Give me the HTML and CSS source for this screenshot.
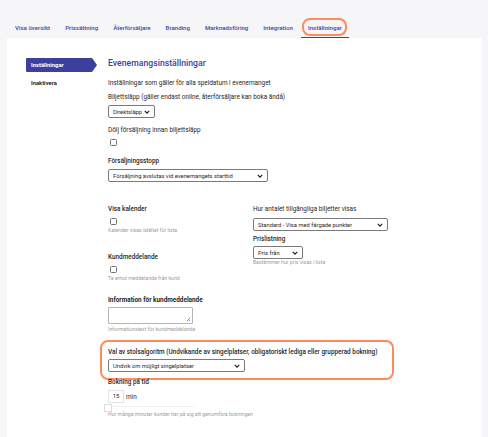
FILE: index.html
```html
<!DOCTYPE html>
<html lang="sv">
  <head>
    <meta charset="UTF-8" />
    <meta name="viewport" content="width=device-width, initial-scale=1.0" />
    <title>Evenemangsinställningar</title>
    <link rel="stylesheet" href="styles.css">
  </head>
  <body>
    <nav class="tabs">
      <a class="tab">Visa översikt</a>
      <a class="tab">Prissättning</a>
      <a class="tab">Återförsäljare</a>
      <a class="tab">Branding</a>
      <a class="tab">Marknadsföring</a>
      <a class="tab">Integration</a>
      <a class="tab active marked">Inställningar</a>
    </nav>

    <div class="panel">
      <aside class="side">
        <a class="side-item active">Inställningar</a>
        <a class="side-item">Inaktivera</a>
      </aside>

      <main class="content">
        <h2>Evenemangsinställningar</h2>
        <p class="intro">Inställningar som gäller för alla speldatum i evenemanget</p>

        <div class="field">
          <div class="label">Biljettsläpp (gäller endast online, återförsäljare kan boka ändå)</div>
          <div class="select w-47"><span>Direktsläpp</span><svg viewBox="0 0 8 5"><path d="M1 1l3 3 3-3"/></svg></div>
        </div>

        <div class="field after-check">
          <div class="label">Dölj försäljning innan biljettsläpp</div>
          <div class="checkbox"></div>
        </div>

        <div class="field">
          <div class="label strong">Försäljningsstopp</div>
          <div class="select w-160"><span>Försäljning avslutas vid evenemangets starttid</span><svg viewBox="0 0 8 5"><path d="M1 1l3 3 3-3"/></svg></div>
        </div>

        <div class="cols">
          <div class="col">
            <div class="field calendar">
              <div class="label strong">Visa kalender</div>
              <div class="checkbox"></div>
              <div class="help">Kalender visas istället för lista</div>
            </div>
            <div class="field message">
              <div class="label strong">Kundmeddelande</div>
              <div class="checkbox"></div>
              <div class="help">Ta emot meddelande från kund</div>
            </div>
            <div class="field info">
              <div class="label bold">Information för kundmeddelande</div>
              <div class="textarea"><svg viewBox="0 0 6 6"><path d="M5 1L1 5M5 3.5L3.5 5"/></svg></div>
              <div class="help">Informationstext för kundmeddelande</div>
            </div>
          </div>

          <div class="col">
            <div class="field availability">
              <div class="label">Hur antalet tillgängliga biljetter visas</div>
              <div class="select w-135"><span>Standard - Visa med färgade punkter</span><svg viewBox="0 0 8 5"><path d="M1 1l3 3 3-3"/></svg></div>
            </div>
            <div class="field pricing">
              <div class="label strong">Prislistning</div>
              <div class="select w-50"><span>Pris från</span><svg viewBox="0 0 8 5"><path d="M1 1l3 3 3-3"/></svg></div>
              <div class="help">Bestämmer hur pris visas i lista</div>
            </div>
          </div>
        </div>

        <div class="field marked-box">
          <div class="label strong">Val av stolsalgoritm (Undvikande av singelplatser, obligatoriskt lediga eller grupperad bokning)</div>
          <div class="select w-137"><span>Undvik om möjligt singelplatser</span><svg viewBox="0 0 8 5"><path d="M1 1l3 3 3-3"/></svg></div>
        </div>

        <div class="field timer">
          <div class="label strong">Bokning på tid</div>
          <div class="number-row">
            <div class="number">15</div>
            <span>min</span>
          </div>
          <div class="ghost"></div>
          <div class="help">Hur många minuter kunder har på sig att genomföra bokningen</div>
        </div>
      </main>
    </div>
  </body>
</html>
```

FILE: styles.css
```css
* {
  box-sizing: border-box;
}

body {
  margin: 0;
  background: #f6f5f7;
  font-family: Roboto, "Liberation Sans", sans-serif;
  color: #1f1f1f;
  font-size: 6.4px;
  min-height: 437px;
}

.tabs {
  display: flex;
  align-items: flex-end;
  height: 38px;
  padding-left: 8px;
}

.tab {
  position: relative;
  padding: 0 7px;
  margin-right: 1px;
  line-height: 19px;
  border-bottom: 1px solid transparent;
  color: #4146a8;
  font-weight: 500;
  font-size: 6.1px;
}

.tab.active {
  border-bottom-color: #3c3f9e;
}

/* orange annotation round the chosen tab */
.tab.marked::after {
  content: "";
  position: absolute;
  left: 1px;
  right: 2px;
  top: 0;
  bottom: 1px;
  border: 2px solid #ff8a5b;
  border-radius: 8px;
}

.panel {
  display: flex;
  margin-left: 7px;
  width: 475px;
  min-height: 399px;
  background: white;
  padding: 19px 0 0 19px;
}

.side {
  width: 71px;
  flex-shrink: 0;
  padding-top: 1px;
}

.side-item {
  display: block;
  font-weight: 700;
  font-size: 5.8px;
  line-height: 14px;
  padding-left: 5px;
  margin-bottom: 4px;
  width: 66px;
}

.side-item.active {
  position: relative;
  background: #3c3f9e;
  color: white;
  border-radius: 1px 0 0 1px;
}

.side-item.active::after {
  content: "";
  position: absolute;
  right: -5px;
  top: 0;
  border-top: 7px solid transparent;
  border-bottom: 7px solid transparent;
  border-left: 5px solid #3c3f9e;
}

.content {
  display: flex;
  flex-direction: column;
  align-items: flex-start;
  margin-left: 11px;
  width: 290px;
}

h2 {
  margin: 0 0 9px;
  font-size: 8.7px;
  line-height: 12px;
  font-weight: 500;
  color: #3c3f9e;
}

.intro {
  margin: 0 0 4px;
  line-height: 10px;
}

.field {
  position: relative;
  display: flex;
  flex-direction: column;
  align-items: flex-start;
  margin-bottom: 7px;
}

.label {
  line-height: 10px;
  margin-bottom: 3px;
  white-space: nowrap;
}

.strong {
  font-weight: 500;
}

.bold {
  font-weight: 700;
}

.select {
  display: flex;
  align-items: center;
  justify-content: space-between;
  height: 13px;
  padding: 0 4px;
  border: 1px solid #7a7a7a;
  border-radius: 2px;
  font-size: 5.8px;
  background: white;
}

.select span {
  white-space: nowrap;
  overflow: hidden;
}

.select svg {
  width: 6px;
  height: 4px;
  flex-shrink: 0;
  fill: none;
  stroke: #1f1f1f;
  stroke-width: 1.6;
}

.w-47 { width: 47px; }
.w-50 { width: 50px; }
.w-135 { width: 135px; }
.w-137 { width: 137px; }
.w-160 { width: 160px; }

.checkbox {
  width: 7px;
  height: 7px;
  margin: 1px 0 0 2px;
  border: 1px solid #707070;
  border-radius: 1.5px;
}

.help {
  margin-top: 2px;
  font-size: 5.2px;
  line-height: 7px;
  color: #9d9d9d;
  white-space: nowrap;
}

.field.after-check {
  margin-bottom: 10px;
}

.cols {
  display: grid;
  grid-template-columns: 145px 145px;
  margin: 15px 0 14px;
}

.col {
  display: flex;
  flex-direction: column;
  align-items: flex-start;
}

.field.calendar {
  margin-bottom: 18px;
}

.field.message {
  margin-bottom: 13px;
}

.field.info {
  margin-bottom: 0;
}

.field.info .label {
  margin-bottom: 2px;
}

.field.availability {
  margin-bottom: 3px;
}

.field.availability .label {
  margin-bottom: 4px;
}

.field.pricing .label {
  margin-bottom: 2px;
}

.field.pricing .help {
  margin-top: 0;
}

.textarea {
  position: relative;
  width: 85px;
  height: 17px;
  border: 1px solid #b5b5b5;
  border-radius: 1px;
}

.textarea svg {
  position: absolute;
  right: 1px;
  bottom: 1px;
  width: 5px;
  height: 5px;
  stroke: #555;
  stroke-width: 0.8;
}

/* orange annotation round the seat algorithm field */
.marked-box::before {
  content: "";
  position: absolute;
  left: -8px;
  top: -7px;
  width: 290px;
  height: 36px;
  border: 2.5px solid #ff8a5b;
  border-radius: 8px;
}

.marked-box {
  margin-bottom: 5px;
}

.marked-box .label {
  margin-bottom: 2px;
}

.number-row {
  display: flex;
  align-items: center;
  gap: 2px;
}

.number {
  width: 16px;
  height: 13px;
  line-height: 11px;
  border: 1px solid #e3e3e3;
  text-align: center;
  font-size: 5.8px;
}

.ghost {
  position: relative;
  height: 8px;
  width: 8px;
  margin: 1px 0 0 -4px;
  border: 1px solid #dcdcdc;
}

.ghost::after {
  content: "";
  position: absolute;
  left: 7px;
  top: 1px;
  width: 83px;
  border-top: 1px solid #f0f0f0;
}

.timer .help {
  margin-top: -1px;
}
```
